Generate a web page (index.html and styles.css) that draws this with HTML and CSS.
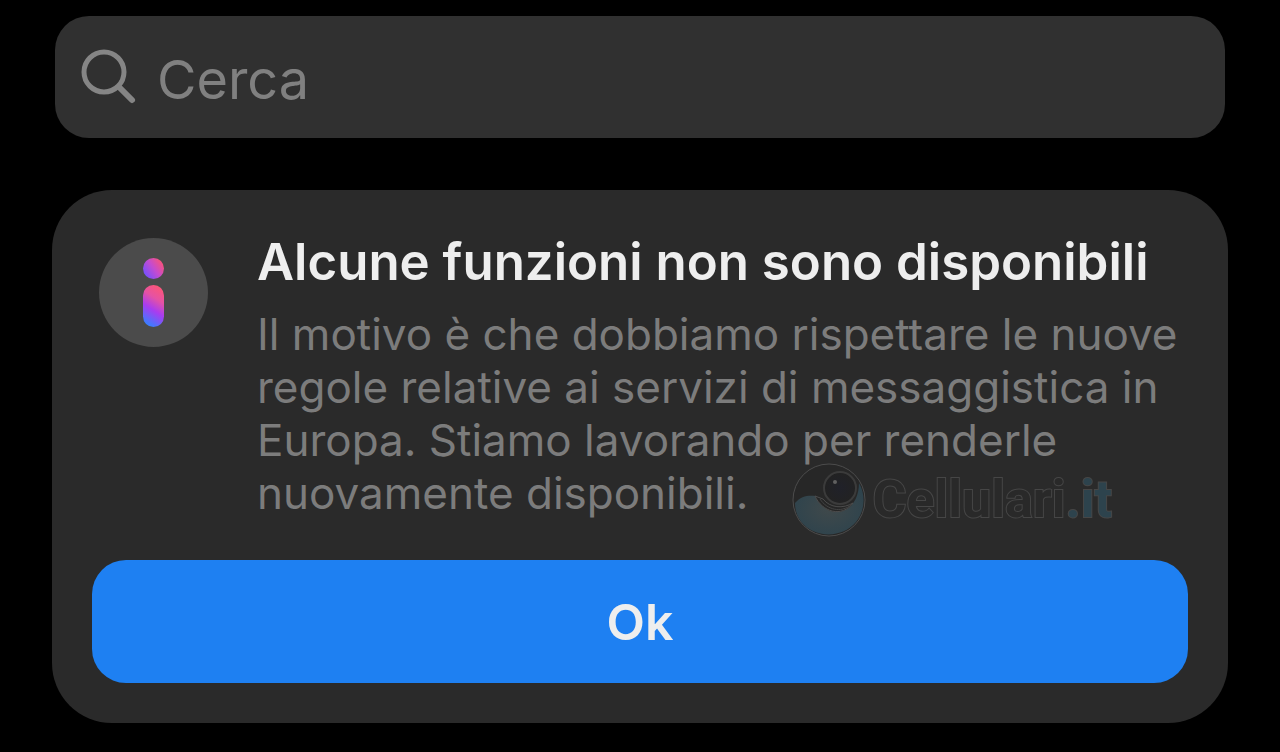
FILE: index.html
```html
<!DOCTYPE html>
<html lang="it">
<head>
    <meta charset="UTF-8">
    <meta name="viewport" content="width=device-width, initial-scale=1.0">
    <title>Cerca</title>
    <link rel="stylesheet" href="styles.css">
</head>
<body>
    <main class="container">
        <label class="search-box">
            <svg class="search-icon" width="56" height="56" viewBox="0 0 56 56" aria-hidden="true">
                <circle cx="23" cy="23" r="20"/>
                <path class="search-handle" d="M39 39 L51 51"/>
            </svg>
            <input class="search-input" type="search" placeholder="Cerca" aria-label="Cerca">
        </label>

        <section class="notice">
            <div class="notice-row">
                <!-- Icona informazioni -->
                <svg class="info-icon" width="110" height="110" viewBox="0 0 110 110" aria-hidden="true">
                    <defs>
                        <linearGradient id="dotGradient" x1="0.95" y1="0.2" x2="0.1" y2="0.8">
                            <stop offset="0" stop-color="#fb5376"/>
                            <stop offset="0.5" stop-color="#c44bd0"/>
                            <stop offset="1" stop-color="#7850fb"/>
                        </linearGradient>
                        <linearGradient id="stemGradient" gradientUnits="userSpaceOnUse" x1="64" y1="52" x2="44" y2="83">
                            <stop offset="0" stop-color="#fb567b"/>
                            <stop offset="0.3" stop-color="#e552a4"/>
                            <stop offset="0.6" stop-color="#a83cf0"/>
                            <stop offset="1" stop-color="#3d7cff"/>
                        </linearGradient>
                    </defs>
                    <circle cx="54.5" cy="54.5" r="54.5" fill="#4b4b4b"/>
                    <circle cx="54.5" cy="30.5" r="10.5" fill="url(#dotGradient)"/>
                    <rect x="44" y="47" width="21" height="42" rx="10.5" fill="url(#stemGradient)"/>
                </svg>
                <div class="notice-text">
                    <h1 class="notice-title">Alcune funzioni non sono disponibili</h1>
                    <p class="notice-body">Il motivo è che dobbiamo rispettare le nuove regole relative ai servizi di messaggistica in Europa. Stiamo lavorando per renderle nuovamente disponibili.</p>
                </div>
            </div>
            <button class="ok-button" type="button">Ok</button>

            <!-- Filigrana sopra il riquadro -->
            <div class="watermark">
                <svg width="74" height="74" viewBox="0 0 74 74" aria-hidden="true">
                    <defs>
                        <radialGradient id="waveGradient" cx="0.5" cy="0.5" r="0.6">
                            <stop offset="0" stop-color="#40494b"/>
                            <stop offset="1" stop-color="#2d434d"/>
                        </radialGradient>
                        <radialGradient id="eyeGradient">
                            <stop offset="0" stop-color="#202129"/>
                            <stop offset="1" stop-color="#222222"/>
                        </radialGradient>
                    </defs>
                    <circle cx="37" cy="37" r="36" fill="#272727" stroke="#4c4c4c"/>
                    <path d="M3 40 C9 33 16 32 24 33 C29 46 40 51 51 48 C62 44 67 32 67 20 C74 32 73 48 64 59 C54 71 36 75 21 68 C10 63 3 53 3 40 Z" fill="url(#waveGradient)"/>
                    <path d="M23 33 C30 49 50 55 61 40 C51 46 38 45 31 36 Z" fill="#262626" stroke="#4c4c4c"/>
                    <path d="M28 36 C35 47 49 50 59 42" fill="none" stroke="#434343"/>
                    <circle cx="48" cy="25" r="16" fill="url(#eyeGradient)" stroke="#3b3b3b" stroke-width="2"/>
                    <circle cx="43" cy="19" r="2" fill="#606060"/>
                </svg>
                <span class="watermark-name">Cellulari<span class="watermark-tld">.it</span></span>
            </div>
        </section>
    </main>
</body>
</html>
```
FILE: styles.css
```css
* {
    box-sizing: border-box;
}

body {
    margin: 0;
    background: #000;
    font-family: Inter, "Liberation Sans", sans-serif;
}

.container {
    padding: 16px 52px 28px;
}

.search-box {
    display: flex;
    align-items: center;
    gap: 20px;
    height: 122px;
    margin: 0 3px 52px;
    padding: 0 26px;
    background: #303030;
    border-radius: 34px;
}

.search-icon {
    flex: none;
    fill: none;
    stroke: #858585;
    stroke-width: 5;
    stroke-linecap: round;
}

.search-handle {
    stroke-width: 6;
}

.search-input {
    flex: 1;
    min-width: 0;
    padding: 4px 0 0;
    border: 0;
    outline: 0;
    background: transparent;
    color: #eee;
    font-family: inherit;
    font-size: 54px;
}

.search-input::placeholder {
    color: #808080;
    opacity: 1;
}

.notice {
    position: relative;
    padding: 48px 40px 40px;
    background: #2a2a2a;
    border-radius: 60px;
}

.notice-row {
    display: flex;
    gap: 48px;
    padding-left: 7px;
    margin-bottom: 40px;
}

.info-icon {
    flex: none;
}

.notice-text {
    flex: 1;
}

.notice-title {
    margin: 0 0 22px;
    color: #eee;
    font-size: 51px;
    font-weight: 600;
    line-height: 48px;
}

.notice-body {
    margin: 0;
    color: #7c7c7c;
    font-size: 44px;
    line-height: 53px;
}

.ok-button {
    display: block;
    width: 100%;
    height: 123px;
    border: 0;
    border-radius: 34px;
    background: #1e80f2;
    color: #eee;
    font-family: inherit;
    font-size: 50px;
    font-weight: 600;
}

.watermark {
    position: absolute;
    right: 116px;
    bottom: 186px;
    display: flex;
    align-items: center;
    gap: 6px;
}

.watermark-name {
    color: #292929;
    font-family: Roboto, "Liberation Sans", sans-serif;
    font-size: 52px;
    font-weight: 700;
    line-height: 74px;
    -webkit-text-stroke: 2px #464646;
    paint-order: stroke fill;
}

.watermark-tld {
    color: #2d434d;
}
```
